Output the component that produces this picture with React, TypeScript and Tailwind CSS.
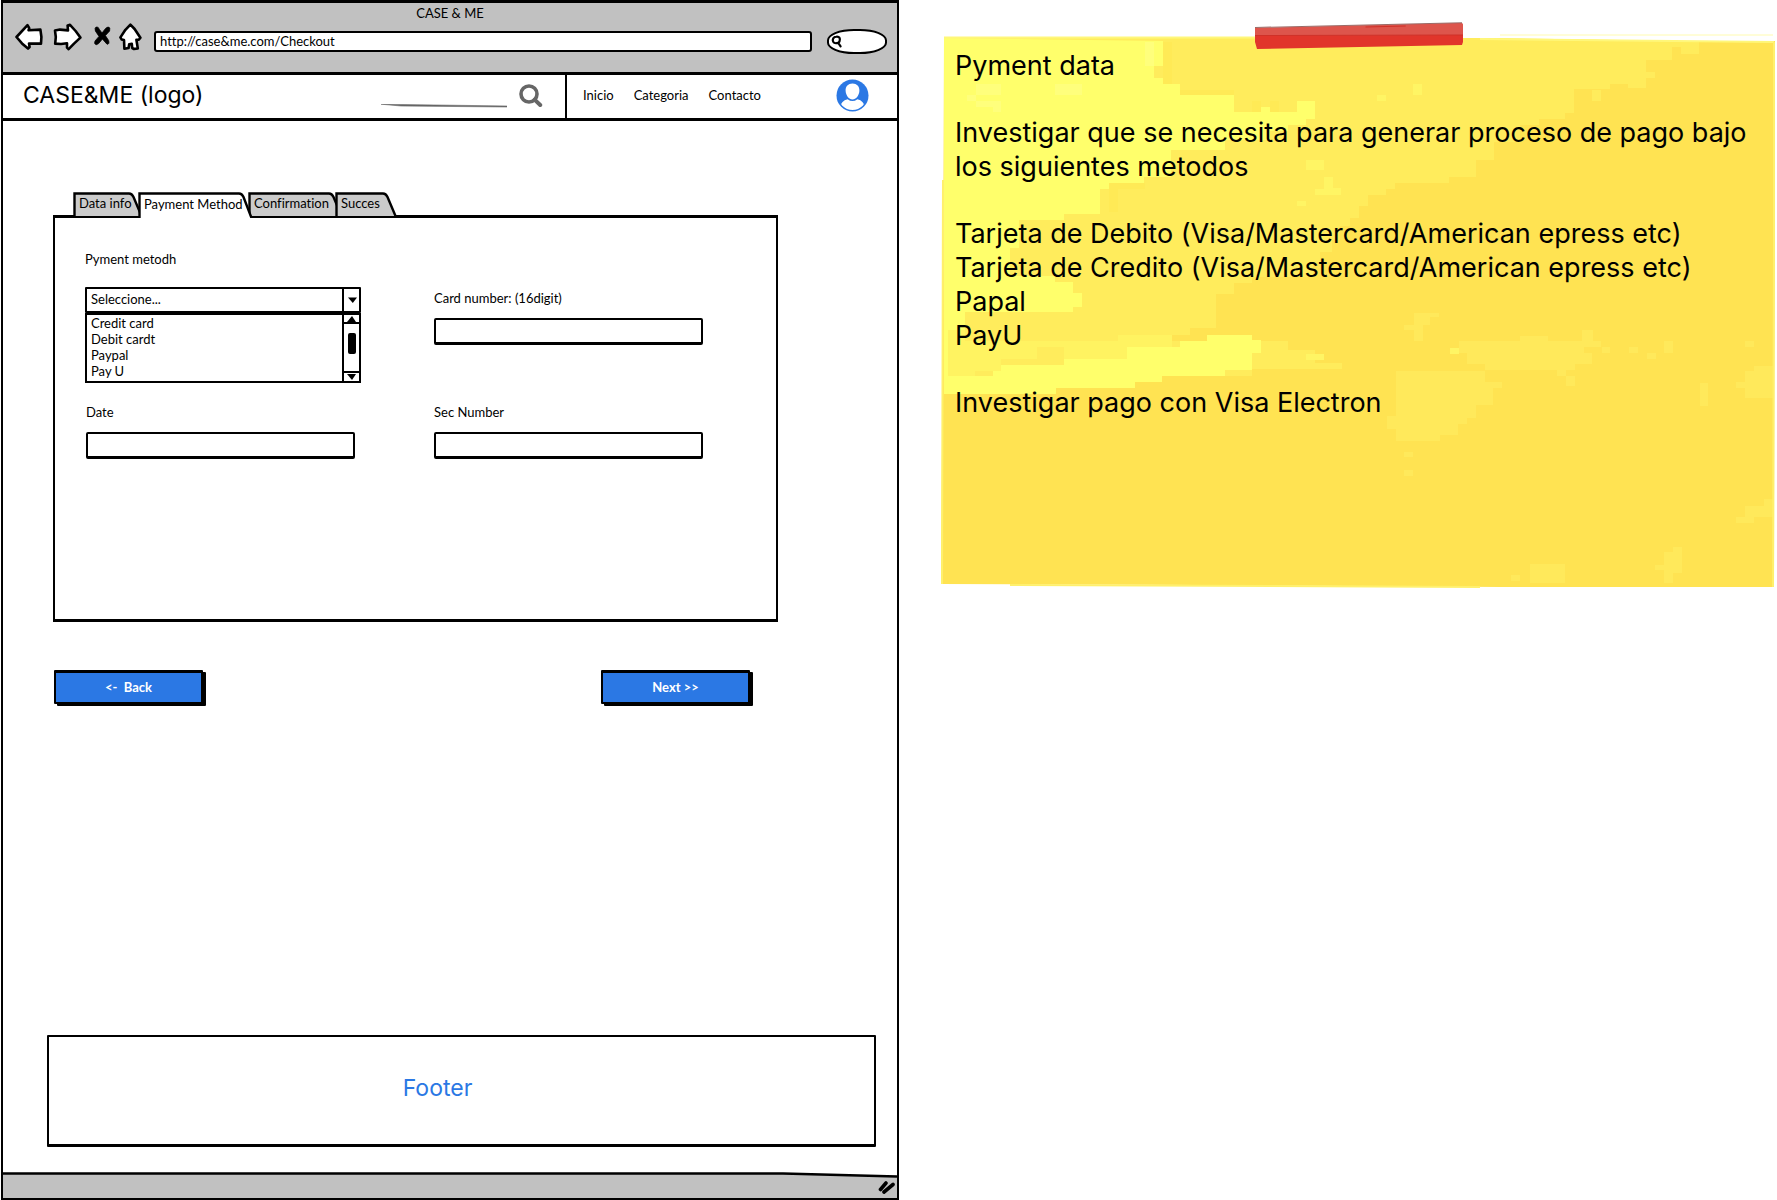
import React from "react";

const INK = "#000000";

function BackIcon() {
  return (
    <svg width="28" height="28" viewBox="0 0 28 28" className="block">
      <path
        d="M1.5 14 12.5 2.2 14.2 5.2 13.6 7.2 25.4 6.6 26.4 14 26 20.6 14 20.6 14.6 24 13 25.6 7 20.4Z"
        fill="#fff" stroke={INK} strokeWidth="2.6" strokeLinejoin="round"
      />
    </svg>
  );
}

function ForwardIcon() {
  return (
    <svg width="29" height="28" viewBox="0 0 29 28" className="block">
      <path
        d="M2 7.6 7 6.6 15 7.4 14.6 2.4 17 1.8 22.6 8 27.4 14.6 21 20.6 15.6 26.2 14 24.6 14 20.2 8 21 2.2 20.6 2.8 14Z"
        fill="#fff" stroke={INK} strokeWidth="2.6" strokeLinejoin="round"
      />
    </svg>
  );
}

function StopIcon() {
  return (
    <svg width="17" height="20" viewBox="0 0 17 20" className="block">
      <path
        d="M2.2 1 Q4.4.4 5.4 3.4 L8 7 11.6 2.4 Q14.4-.2 15.8 2 L15.6 5 11.4 9.6 14.6 14.4 Q15.8 18.4 13 18.2 L8.4 13 4.6 17.6 Q2 19.8.6 17.4 L1 15 5 10.4 1.4 5 Q.4 1.8 2.2 1Z"
        fill={INK} stroke={INK} strokeWidth="0.8"
      />
    </svg>
  );
}

function HomeIcon() {
  return (
    <svg width="23" height="28" viewBox="0 0 23 28" className="block">
      <path
        d="M11.4 1.6 15.6 6 21.4 14.8 19.8 16.8 17.4 16.8 18.8 25.4 15 26 13.2 25 12.8 20.8 10.2 21.2 9.6 25 5.4 25.8 5 17 2.6 16.4 1.4 14.4 6.4 6.8Z"
        fill="#fff" stroke={INK} strokeWidth="2.6" strokeLinejoin="round"
      />
    </svg>
  );
}

function MiniSearch() {
  return (
    <svg width="12" height="13" viewBox="0 0 12 13" className="block shrink-0">
      <path d="M5.4 1.6C8.4 1.2 9.4 3.4 8.6 6 8 8.6 3.4 9 2.2 6.8 1 4.4 2.4 1.8 5.4 1.6ZM7.4 8.2 9.6 11.4" fill="none" stroke={INK} strokeWidth="2.2" strokeLinecap="round" />
    </svg>
  );
}

function SearchIcon() {
  return (
    <svg width="24" height="24" viewBox="0 0 24 24" className="block">
      <circle cx="10" cy="10" r="8" fill="none" stroke="#666" strokeWidth="3.6" />
      <path d="M15.6 15.6 21.2 21" stroke="#666" strokeWidth="4" strokeLinecap="round" />
    </svg>
  );
}

function UserIcon() {
  return (
    <svg width="33" height="33" viewBox="0 0 33 33" className="block">
      <clipPath id="avatar-clip"><circle cx="16.5" cy="16.5" r="14.4" /></clipPath>
      <circle cx="16.5" cy="16.5" r="16" fill="#2b78e4" />
      <g clipPath="url(#avatar-clip)">
        <path d="M4 31C4.4 23.4 7.4 21.4 11.6 20.2Q16.5 24 21.4 20.2C25.6 21.4 28.6 23.4 29 31Z" fill="#fff" />
      </g>
      <path d="M16.5 4.6C20.8 4.6 23.6 7.6 23.4 11.8 23.2 16.4 20 20.6 16.5 20.6S9.8 16.4 9.6 11.8C9.4 7.6 12.2 4.6 16.5 4.6Z" fill="#fff" />
    </svg>
  );
}

function TabShape({ width, active }: { width: number; active: boolean }) {
  const h = active ? 26 : 24;
  return (
    <svg width={width} height={h} viewBox={`0 0 ${width} ${h}`} className="absolute inset-0 block">
      <path
        d={`M1.5 ${h} V1.5 H${width - 14} Q${width - 11} 1.5 ${width - 9.5} 5 L${width - 1.5} ${h}`}
        fill={active ? "#fff" : "#cbcbcb"} stroke={INK} strokeWidth="2.4"
      />
    </svg>
  );
}

function Tab({ label, width, active = false, className }: { label: string; width: number; active?: boolean; className: string }) {
  return (
    <button type="button" role="tab" aria-selected={active} className={`relative text-left whitespace-nowrap ${className}`}>
      <TabShape width={width} active={active} />
      <span className="relative">{label}</span>
    </button>
  );
}

function Field({ id, label, className = "" }: { id: string; label: string; className?: string }) {
  return (
    <div className={`pt-px ${className}`}>
      <label htmlFor={id} className="block h-5 leading-5">{label}</label>
      <input id={id} type="text" className="mt-2.5 block h-[27px] w-full rounded-[2px] border-2 border-b-3 border-black bg-white px-1.5 outline-none" />
    </div>
  );
}

function NoteTexture() {
  return (
    <svg viewBox="941 34 836 555" preserveAspectRatio="none" className="absolute inset-0 h-full w-full" aria-hidden="true">
      <path d="M944 37 L1260 37 1500 39 1680 41 1775 41 1774 587 1500 587 1200 585 941 584 943 300Z" fill="#ffe352" />
      <path d="M944 38H1500L1681 41V47H1672V60H1646V88H1628V84H1610V89H1574V113H1565V119H1539V125H1520V142H1494V160H1476V177H1449V183H1395V189H1386V195H1368V206H1359V218H1350V226H1340V240H1332V252H1320V262H1313V277H1252V283H1234V294H1216V328H1190V335H1171V341H1288V350H1315V363H1342V369H1252V376H1162V382H1072V388H944Z" fill="#ffec5c" />
      <path d="M1681 42H1699V54H1681ZM1592 90H1601V101H1592ZM1646 72H1655V78H1646Z" fill="#ffec5c" />
      <path d="M944 38 L1163 41V66H1154V78H1171V84H1180V95H1234V112H1252V107H1270V112H1297V101H1315V119H1306V125H1288V131H1270V140H1225V150H1171V177H1144V183H1117V189H1100V214H1064V220H1019V248H1010V276H1055V282H1073V293H1082V307H1073V312H1019V324H965V330H948V360H962V376H993V365H1064V359H1127V347H1180V341H1207V335H1252V340H1261V353H1252V370H1225V376H1162V382H1135V388H1056V394H944Z" fill="#ffff6b" />
      <path d="M948 330H1091V347H1037V359H1001V371H975V376H948Z" fill="#fff361" />
      <path d="M1091 341H1118V335H1172V347H1127V359H1064V347H1091Z" fill="#fff361" />
      <path d="M965 312H1019V324H1091V341H965Z" fill="#ffec5c" />
      <path d="M1306 160H1324V170H1306ZM1324 177H1333V188H1341V195H1315V189H1324ZM1297 201H1306V206H1297ZM1413 84H1422V95H1413ZM1377 95H1386V101H1377ZM1306 354H1324V360H1306ZM1450 348H1459V354H1450ZM1423 371H1440V382H1432V376H1423Z" fill="#fff564" />
      <path d="M1145 42H1154V66H1145ZM976 84H1001V95H967V101H994V107H976ZM993 101H1001V112H993ZM1055 84H1082V95H1055Z" fill="#ffff7c" />
      <path d="M1163 42H1172V84H1163ZM1180 90H1234V95H1180ZM1252 101H1261V112H1252ZM1270 101H1279V112H1270ZM1109 183H1118V212H1109ZM1118 183H1145V189H1118Z" fill="#ffea56" />
      <path d="M1414 313H1439V317H1430V325H1423V341H1414V330H1404V325H1414ZM1459 341H1520V336H1548V341H1582V330H1593V341H1601V347H1584V353H1592V364H1575V370H1566V386H1575V376H1557V370H1485V364H1467V353H1459ZM1396 371H1485V382H1502V388H1493V405H1476V418H1467V424H1458V435H1440V441H1396V429H1387V416H1396ZM1404 452H1413V457H1404ZM1404 470H1413V476H1404Z" fill="#ffe95b" />
      <path d="M1602 347H1610V353H1602ZM1629 347H1638V353H1629ZM1664 341H1673V353H1656V359H1647V353H1664ZM1745 341H1754V347H1745ZM1700 383H1708V406H1700ZM1754 366H1773V398H1745V388H1736V382H1745V371H1754ZM1764 499H1774V517H1754V523H1736V517H1745V506H1764ZM1673 547H1682V573H1673V583H1664V570H1655V565H1664V552H1673ZM1530 564H1565V583H1530ZM1511 575H1520V581H1511Z" fill="#ffe95b" />
      <path d="M944 37.5H1260M1480 39 1774 42" stroke="#fff77a" strokeWidth="2" fill="none" />
      <path d="M1500 35H1773" stroke="#fffbb0" strokeWidth="1" fill="none" />
      <path d="M1774 42V240L1773 587M1010 585 1480 587M943 180 942 584" stroke="#fff06c" strokeWidth="2" fill="none" />
    </svg>
  );
}

function Tape() {
  return (
    <svg viewBox="0 0 208 27" preserveAspectRatio="none" className="absolute left-[37.5%] -top-3 h-[27px] w-[25%]" aria-hidden="true">
      <path d="M0 6 L206 1 207 3V20L206 23 2 27 0 20Z" fill="#e1352b" />
      <path d="M0 6 L206 1 207 3V13L0 14Z" fill="#dd554c" />
      <path d="M0 5.5 206 .8" stroke="#9a6a66" strokeWidth="1" />
      <path d="M0 13.5 207 13 M110 5 150 4" stroke="#cf3128" strokeWidth="1" />
    </svg>
  );
}

function BrowserBar() {
  return (
    <header className="h-[72px] border-b-3 border-black bg-[#c1c1c1]">
      <h1 className="h-5 text-center leading-5">CASE &amp; ME</h1>
      <div className="flex h-9 items-center pl-3 pr-2.5">
        <div className="mb-2 flex items-center">
          <button type="button" aria-label="Back"><BackIcon /></button>
          <button type="button" aria-label="Forward" className="ml-2.5"><ForwardIcon /></button>
          <button type="button" aria-label="Stop" className="mb-0.5 ml-3"><StopIcon /></button>
          <button type="button" aria-label="Home" className="ml-2"><HomeIcon /></button>
        </div>
        <input
          type="text" aria-label="Address" defaultValue="http://case&me.com/Checkout"
          className="ml-3 h-[21px] min-w-0 flex-1 rounded-[3px] border-2 border-black bg-white pl-1 outline-none"
        />
        <label className="ml-[15px] flex h-[25px] w-[60px] items-center rounded-[45%] border-2 border-black bg-white pl-0.5">
          <MiniSearch />
          <input type="search" aria-label="Browser search" className="w-9 bg-transparent outline-none" />
        </label>
      </div>
    </header>
  );
}

function SiteNav() {
  return (
    <div className="flex h-[46px] items-stretch border-b-3 border-black bg-white">
      <div className="flex flex-[568] items-center pb-0.5 pl-5">
        <span className="font-['Inter',sans-serif] text-[23px]">CASE&amp;ME (logo)</span>
        <div className="ml-auto flex items-center">
          <div className="relative w-[126px]">
            <input type="search" aria-label="Search" className="block h-6 w-full bg-transparent outline-none" />
            <svg viewBox="0 0 126 4" preserveAspectRatio="none" className="absolute bottom-0 left-0 h-1 w-full" aria-hidden="true">
              <path d="M0 .2 126 2 126 3 20 2Z" fill="#666" stroke="#666" strokeWidth="0.6" />
            </svg>
          </div>
          <button type="button" aria-label="Search" className="ml-3 mr-[22px]"><SearchIcon /></button>
        </div>
      </div>
      <nav className="flex flex-[329] items-center gap-5 border-l-2 border-black pb-0.5 pl-4">
        <a href="#inicio">Inicio</a>
        <a href="#categoria">Categoria</a>
        <a href="#contacto">Contacto</a>
        <button type="button" aria-label="Account" className="ml-auto mr-7"><UserIcon /></button>
      </nav>
    </div>
  );
}

function MethodPicker() {
  return (
    <div>
      <div className="relative">
        <select id="method" defaultValue="" className="block h-[26px] w-full appearance-none rounded-[1px] border-2 border-black bg-white pl-1 outline-none">
          <option value="">Seleccione...</option>
        </select>
        <span className="pointer-events-none absolute inset-y-0 right-0 flex w-[19px] items-center justify-center border-l-2 border-black">
          <svg width="9" height="6" viewBox="0 0 9 6" aria-hidden="true"><path d="M0 .6H9L4.8 6Z" fill={INK} /></svg>
        </span>
      </div>
      <div className="flex h-[70px] border-2 border-black bg-white">
        <ul role="listbox" aria-label="Pyment metodh" className="flex-1 pl-1 leading-4">
          <li role="option" aria-selected={false}>Credit card</li>
          <li role="option" aria-selected={false}>Debit cardt</li>
          <li role="option" aria-selected={false}>Paypal</li>
          <li role="option" aria-selected={false}>Pay U</li>
        </ul>
        <div className="flex w-[17px] flex-col justify-between border-l-2 border-black">
          <span className="flex h-[9px] items-center justify-center border-b-2 border-black">
            <svg width="9" height="6" viewBox="0 0 9 6" aria-hidden="true"><path d="M0 6H9L5 0Z" fill={INK} /></svg>
          </span>
          <span className="mb-2 ml-1 h-[21px] w-2 rounded-[2px] bg-black" />
          <span className="flex h-[10px] items-center justify-center border-t-2 border-black">
            <svg width="9" height="6" viewBox="0 0 9 6" aria-hidden="true"><path d="M0 0H9L5 6Z" fill={INK} /></svg>
          </span>
        </div>
      </div>
    </div>
  );
}

const actionButton =
  "h-[34px] w-[149px] rounded-[1px] border-2 border-t-3 border-black bg-[#2b78e4] font-bold whitespace-pre text-white shadow-[3px_2px_0_#000]";

function CheckoutWindow() {
  return (
    <section className="ml-px flex min-h-screen flex-col border-2 border-t-3 border-black bg-white">
      <BrowserBar />
      <SiteNav />
      <main className="flex flex-1 flex-col pt-[71px]">
        <form className="ml-[50px] mr-[119px]" onSubmit={(e) => e.preventDefault()}>
          <div role="tablist" className="relative -mb-[3px] ml-5 flex h-[26px] items-start">
            <Tab label="Data info" width={70} className="h-6 w-[70px] pl-[6px]" />
            <Tab label="Payment Method" width={115} active className="z-20 -ml-[5px] h-[26px] w-[115px] pl-[6px]" />
            <Tab label="Confirmation" width={95} className="-ml-[5px] h-6 w-[95px] pl-[6px]" />
            <Tab label="Succes" width={62} className="-ml-2 h-6 w-[62px] pl-[6px]" />
          </div>
          <div role="tabpanel" className="h-[407px] border-2 border-t-3 border-b-3 border-black pl-[30px] pr-[73px] pt-[31px]">
            <label htmlFor="method" className="block h-5 leading-5">Pyment metodh</label>
            <div className="mt-[18px] grid grid-cols-[276fr_269fr] gap-x-[73px] gap-y-[18px]">
              <MethodPicker />
              <Field id="card" label="Card number: (16digit)" />
              <Field id="date" label="Date" className="ml-px mr-[6px]" />
              <Field id="sec" label="Sec Number" />
            </div>
          </div>
          <div className="ml-px mr-7 mt-12 flex justify-between">
            <button type="button" className={actionButton}>{"<-  Back"}</button>
            <button type="submit" className={actionButton}>{"Next >>"}</button>
          </div>
        </form>
        <footer className="mb-[25px] ml-11 mr-[21px] mt-auto flex h-28 items-center justify-center rounded-[1px] border-2 border-b-3 border-black pr-12 pb-1 font-['Inter',sans-serif] text-[23px] text-[#2b78e4]">
          Footer
        </footer>
      </main>
      <div className="relative h-[26px]">
        <svg viewBox="0 0 894 26" preserveAspectRatio="none" className="absolute inset-0 h-full w-full" aria-hidden="true">
          <path d="M0 1.5H780L894 4.5V26H0Z" fill="#c1c1c1" />
          <path d="M0 1.5H780L894 4.5" fill="none" stroke={INK} strokeWidth="2.6" />
        </svg>
        <svg width="17" height="14" viewBox="0 0 17 14" className="absolute right-0.5 bottom-1" aria-hidden="true">
          <path d="M2.5 9.5 8 3M6 12 15 4.5" stroke={INK} strokeWidth="3.6" strokeLinecap="round" />
        </svg>
      </div>
    </section>
  );
}

function StickyNote() {
  return (
    <aside className="relative ml-[42px] mt-[34px] h-[555px]">
      <NoteTexture />
      <Tape />
      <div className="relative flex flex-col gap-[33px] pl-3.5 pt-[15px] font-['Inter',sans-serif] text-[27px] leading-[34px] whitespace-nowrap">
        <p>Pyment data</p>
        <p>Investigar que se necesita para generar proceso de pago bajo<br />los siguientes metodos</p>
        <p>
          Tarjeta de Debito (Visa/Mastercard/American epress etc)<br />
          Tarjeta de Credito (Visa/Mastercard/American epress etc)<br />
          Papal<br />
          PayU
        </p>
        <p>Investigar pago con Visa Electron</p>
      </div>
    </aside>
  );
}

export default function App() {
  return (
    <div className="grid min-h-screen grid-cols-[899fr_878fr] items-start bg-white font-['Lato','Noto_Sans',sans-serif] text-[13px] text-black [font-variant-ligatures:none]">
      <CheckoutWindow />
      <StickyNote />
    </div>
  );
}
